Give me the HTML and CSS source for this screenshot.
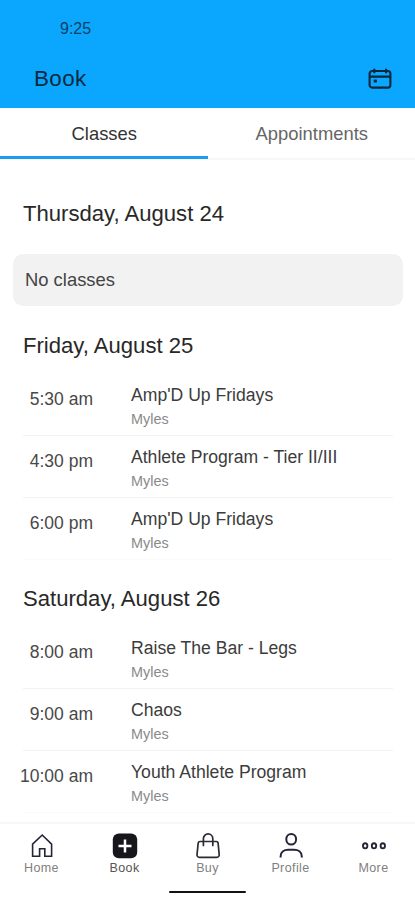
FILE: index.html
```html
<!DOCTYPE html>
<html lang="en">
<head>
<meta charset="utf-8">
<title>Book</title>
<link rel="stylesheet" href="styles.css">
</head>
<body>
<div class="app">
  <header class="header">
    <div class="status">9:25</div>
    <div class="title-bar">
      <h1>Book</h1>
      <svg class="calendar" width="26" height="24" viewBox="0 0 26 24" fill="none" stroke="#08263c" stroke-width="2.1">
        <rect x="2.6" y="4" width="20.8" height="16.6" rx="2.6"/>
        <path d="M2.6 9.6h20.8M7.3 1.8v4.4M19.1 1.8v4.4"/>
        <rect x="6.7" y="12.4" width="3.2" height="3.2" rx=".6" fill="#08263c" stroke="none"/>
      </svg>
    </div>
  </header>
  <nav class="tabs">
    <div class="tab active">Classes</div>
    <div class="tab">Appointments</div>
  </nav>
  <main class="schedule">
    <h2>Thursday, August 24</h2>
    <div class="empty">No classes</div>
    <h2>Friday, August 25</h2>
    <ul class="classes">
      <li><time>5:30 am</time><div><p class="name">Amp'D Up Fridays</p><p class="coach">Myles</p></div></li>
      <li><time>4:30 pm</time><div><p class="name">Athlete Program - Tier II/III</p><p class="coach">Myles</p></div></li>
      <li><time>6:00 pm</time><div><p class="name">Amp'D Up Fridays</p><p class="coach">Myles</p></div></li>
    </ul>
    <h2>Saturday, August 26</h2>
    <ul class="classes">
      <li><time>8:00 am</time><div><p class="name">Raise The Bar - Legs</p><p class="coach">Myles</p></div></li>
      <li><time>9:00 am</time><div><p class="name">Chaos</p><p class="coach">Myles</p></div></li>
      <li><time>10:00 am</time><div><p class="name">Youth Athlete Program</p><p class="coach">Myles</p></div></li>
    </ul>
  </main>
  <footer class="bottom">
    <nav class="nav">
      <div class="item">
        <svg width="28" height="28" viewBox="0 0 28 28" fill="none" stroke="#25253a" stroke-width="1.6"><path d="M4.6 12.2 14.2 3l9.4 9.2v12.1h-6.8v-7.5h-5.2v7.5h-7z"/></svg>
        <span>Home</span>
      </div>
      <div class="item current">
        <svg width="28" height="28" viewBox="0 0 28 28"><rect x="1.8" y="1.6" width="24.4" height="24.6" rx="6" fill="#17171b"/><path d="M14 7.4v13M7.5 13.9h13" stroke="#fff" stroke-width="2.5"/></svg>
        <span>Book</span>
      </div>
      <div class="item">
        <svg width="28" height="28" viewBox="0 0 28 28" fill="none" stroke="#2b2b36" stroke-width="1.7" stroke-linejoin="round" stroke-linecap="round"><path d="M6 9.5h16.3a1.8 1.8 0 0 1 1.8 1.5l1.1 11.6a2.4 2.4 0 0 1-2.4 2.7H5.4A2.4 2.4 0 0 1 3 22.6L4.2 11A1.8 1.8 0 0 1 6 9.5zM9.4 13.5V6.6a4.7 4.7 0 0 1 9.4 0v6.9"/></svg>
        <span>Buy</span>
      </div>
      <div class="item">
        <svg width="28" height="28" viewBox="0 0 28 28" fill="none" stroke="#25253a" stroke-width="2"><ellipse cx="14.2" cy="7.2" rx="4.9" ry="5.3"/><path d="M3.6 25.5v-1c0-4.7 3.8-6.7 7.6-6.7h6c3.8 0 7.6 2 7.6 6.7v1"/></svg>
        <span>Profile</span>
      </div>
      <div class="item">
        <svg width="28" height="28" viewBox="0 0 28 28" fill="none" stroke="#25253a" stroke-width="1.9"><ellipse cx="5.2" cy="13.8" rx="2.2" ry="2.6"/><ellipse cx="14" cy="13.8" rx="2.2" ry="2.6"/><ellipse cx="22.8" cy="13.8" rx="2.2" ry="2.6"/></svg>
        <span>More</span>
      </div>
    </nav>
    <div class="home-indicator"></div>
  </footer>
</div>
</body>
</html>
```

FILE: styles.css
```css
* { box-sizing: border-box; margin: 0; padding: 0; }
body {
  font-family: "Liberation Sans", Arial, sans-serif;
  background: #fff;
  color: #2b2b2b;
}
.app {
  width: 415px;
  height: 900px;
  display: flex;
  flex-direction: column;
  overflow: hidden;
}
.header { height: 108px; flex: none; background: #0ba7ff; }
.status {
  height: 56px;
  padding-left: 60px;
  font-size: 16px;
  line-height: 57px;
  color: #0b4163;
}
.title-bar {
  height: 46px;
  padding: 0 22px 0 34px;
  display: flex;
  align-items: center;
  justify-content: space-between;
}
h1 { font-size: 22.4px; font-weight: 400; letter-spacing: .4px; color: #0a2a40; }
.tabs { display: flex; height: 52px; flex: none; border-bottom: 2px solid #f7f7f7; }
.tab {
  flex: 1;
  height: 51px;
  padding-left: 1px;
  text-align: center;
  font-size: 18.4px;
  line-height: 51px;
  color: #666;
}
.tab.active { color: #333; border-bottom: 3px solid #1c9cef; }
.schedule { flex: 1; min-height: 0; overflow: hidden; padding: 28px 12px 0 13px; }
h2 {
  height: 52px;
  padding-left: 10px;
  font-size: 22.1px;
  font-weight: 400;
  line-height: 52px;
  color: #282828;
}
.empty {
  height: 52px;
  margin: 14px 0;
  padding-left: 12px;
  border-radius: 10px;
  background: #f2f2f2;
  font-size: 18.4px;
  line-height: 52px;
  color: #444;
}
.classes { list-style: none; padding: 2px 10px 0; margin-bottom: 13px; }
.classes li {
  height: 62px;
  display: flex;
  border-bottom: 1px solid #f3f3f3;
}
.classes li:last-child { border-color: #fafafa; }
time {
  width: 80px;
  margin-left: -10px;
  margin-right: 38px;
  padding-top: 14px;
  text-align: right;
  white-space: nowrap;
  font-size: 17.5px;
  line-height: 22px;
  color: #484848;
}
.name {
  padding-top: 10px;
  margin-bottom: 1px;
  font-size: 17.6px;
  line-height: 22px;
  color: #3c3c3c;
}
.coach { font-size: 14.4px; line-height: 25px; color: #8a8a8a; }
.bottom { height: 78px; flex: none; border-top: 2px solid #f7f7f7; background: #fff; }
.nav { display: flex; height: 66px; padding-top: 8px; }
.item {
  flex: 1;
  display: flex;
  flex-direction: column;
  align-items: center;
  font-size: 12.5px;
  line-height: 16px;
  letter-spacing: .4px;
  color: #808080;
}
.item svg { display: block; }
.item.current { color: #555; }
.home-indicator { width: 77px; height: 2px; margin: 1px auto 0; border-radius: 1px; background: #111; }
```
